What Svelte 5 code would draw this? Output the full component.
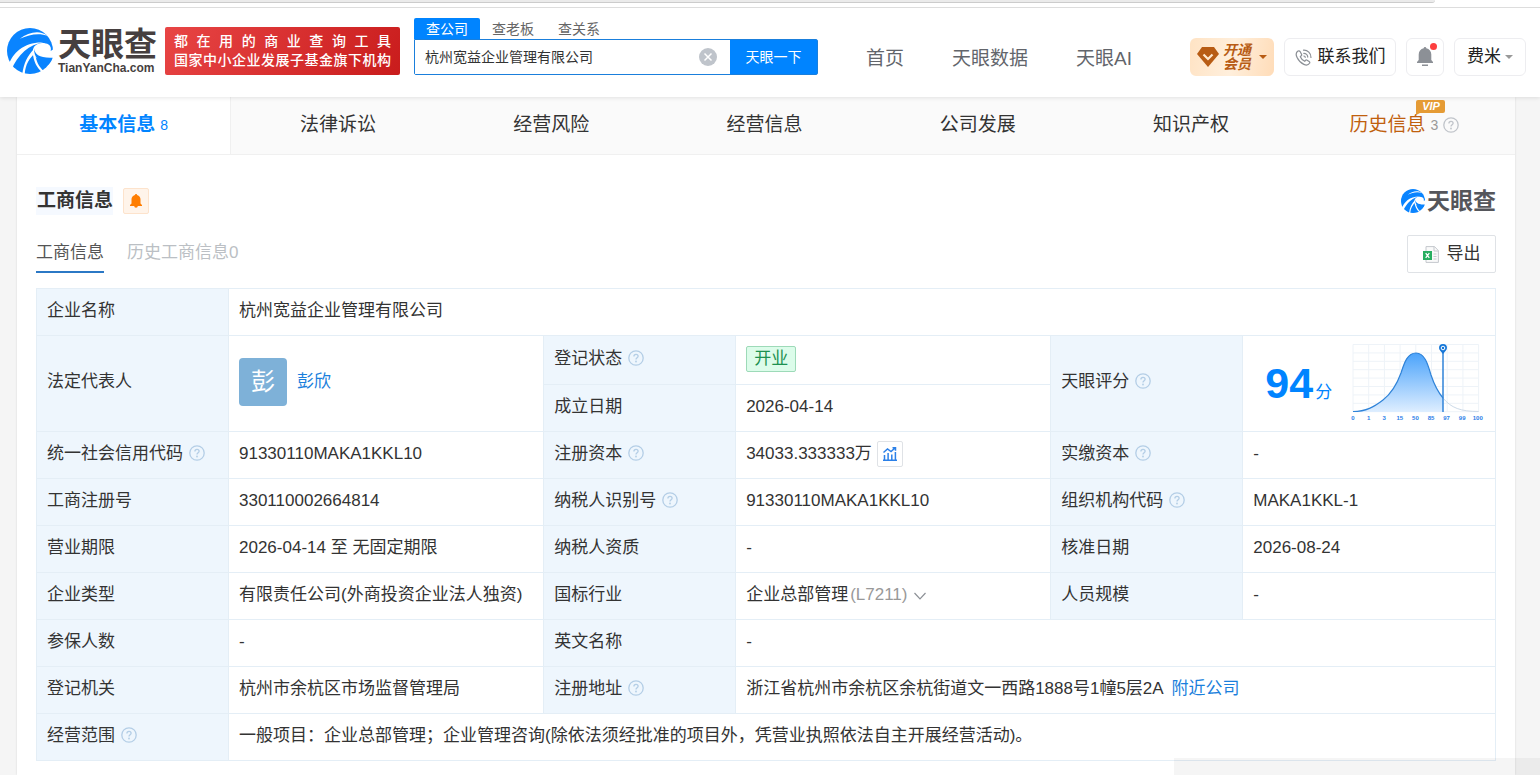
<script lang="ts">
    let keyword = "杭州宽益企业管理有限公司";

    const searchTypes = ["查公司", "查老板", "查关系"];
    const navLinks = ["首页", "天眼数据", "天眼AI"];
    const tabs = ["法律诉讼", "经营风险", "经营信息", "公司发展", "知识产权"];

    const chartLabels = [0, 1, 3, 15, 50, 85, 97, 99, 100];
    const gridLines = [0, 1, 2, 3, 4, 5, 6, 7, 8];
</script>

{#snippet help()}
    <svg class="help" viewBox="0 0 16 16" aria-hidden="true">
        <circle cx="8" cy="8" r="7.2" fill="none" stroke="currentColor" stroke-width="1.3"/>
        <path d="M5.9 6.5C5.9 5.1 6.8 4.3 8 4.3s2.1.8 2.1 1.9c0 1.4-2.1 1.6-2.1 3.2" fill="none" stroke="currentColor" stroke-width="1.3"/>
        <circle cx="8" cy="11.5" r=".9" fill="currentColor"/>
    </svg>
{/snippet}

{#snippet swirl()}
    <svg class="swirl" viewBox="8 10 136 136" aria-hidden="true">
        <circle cx="76" cy="78" r="68" fill="#0a84ff"/>
        <g fill="#fff">
            <path d="M112 54C92 54 80 70 86 86C94 104 112 110 152 104L152 68L137 78C141 62 130 54 112 54Z"/>
            <path d="M46 42C72 21 106 15 128 33C104 24 74 28 46 42Z"/>
            <path d="M12 122C24 82 62 50 116 53C74 58 40 88 20 136Z"/>
            <path d="M88 72C68 92 56 118 53 150L60 150C62 120 72 100 92 84Z"/>
            <path d="M84 82C86 108 96 128 112 141L117 137C102 124 94 108 92 88Z"/>
        </g>
        <path d="M88 70C89 88 106 100 143 98C140 108 134 116 128 120C104 116 87 96 88 70Z" fill="#0a84ff"/>
    </svg>
{/snippet}

<div class="page">
    <header>
        <div class="strip"></div>
        <div class="bar">
            <a class="logo" href="#home">
                {@render swirl()}
                <span class="wordmark">
                    <b>天眼查</b>
                    <small>TianYanCha.com</small>
                </span>
            </a>
            <div class="slogan">
                <p>都在用的商业查询工具</p>
                <p>国家中小企业发展子基金旗下机构</p>
            </div>
            <form class="search" on:submit|preventDefault>
                <div class="types">
                    {#each searchTypes as type, i}
                        <button type="button" class:active={i === 0}>{type}</button>
                    {/each}
                </div>
                <div class="field">
                    <input type="text" aria-label="查公司" bind:value={keyword}/>
                    <button type="button" class="clear" aria-label="清空" on:click={() => (keyword = "")}>
                        <svg viewBox="0 0 18 18">
                            <circle cx="9" cy="9" r="9" fill="#bfc4cb"/>
                            <path d="M5.5 5.5l7 7M12.5 5.5l-7 7" stroke="#fff" stroke-width="1.5"/>
                        </svg>
                    </button>
                    <button class="submit">天眼一下</button>
                </div>
            </form>
            <nav>
                {#each navLinks as link}
                    <a href="#nav">{link}</a>
                {/each}
            </nav>
            <div class="actions">
                <button class="vip">
                    <svg class="gem" viewBox="0 0 22 20">
                        <path d="M5 0h12l5 7-11 13L0 7z" fill="#b85c14"/>
                        <path d="M6.500 7.500l4.500 4.500 4.500-4.500" fill="none" stroke="#ffe9cf" stroke-width="2.200"/>
                    </svg>
                    <span>开通<br>会员</span>
                    <svg class="caret" viewBox="0 0 8 4"><path d="M0 0h8L4 4z" fill="currentColor"/></svg>
                </button>
                <button class="contact">
                    <svg class="phone" viewBox="0 0 18 18" fill="none" stroke="#8c9096" stroke-width="1.300" stroke-linecap="round" stroke-linejoin="round">
                        <path d="M3.200 2.200C1.200 3.500.7 6 2.200 9c1.600 3.400 4 5.800 7.200 7.300 2.700 1.200 4.800.6 6-1.200.4-.7.2-1.400-.4-1.800l-2.200-1.500c-.6-.4-1.300-.3-1.700.2l-.8 1c-2.200-1-3.700-2.600-4.700-4.900l1-.9c.5-.4.6-1 .3-1.600L5.400 2.700c-.5-.8-1.300-1-2.200-.5z"/>
                        <path d="M9.300 4.600c2.300-.1 4.200 1.700 4.200 4M9 1.300c4.400-.3 8 3.200 7.900 7.600M9.400 7.400c.8 0 1.400.6 1.400 1.400"/>
                    </svg>
                    联系我们
                </button>
                <button class="notice" aria-label="消息">
                    <svg class="bell" viewBox="0 0 18 20" fill="#8c9096">
                        <path d="M9 0c.8 0 1.300.6 1.300 1.300C13.400 2 15.300 4.500 15.300 7.500V13l1.700 2v1H1v-1l1.700-2V7.500c0-3 1.900-5.500 5-6.200C7.700.6 8.200 0 9 0zM6 17.500h6V19H6z"/>
                    </svg>
                    <i class="dot"></i>
                </button>
                <button class="user">
                    费米
                    <svg class="caret" viewBox="0 0 8 4"><path d="M0 0h8L4 4z" fill="currentColor"/></svg>
                </button>
            </div>
        </div>
    </header>

    <main>
        <div class="tabs">
            <a class="current" href="#base">基本信息 <small>8</small></a>
            {#each tabs as tab}
                <a href="#tab">{tab}</a>
            {/each}
            <a class="history" href="#history">
                <span class="label">历史信息
                    <svg class="tag" viewBox="0 0 29 15" aria-label="VIP">
                        <path d="M2 0h25a2 2 0 0 1 2 2v9a2 2 0 0 1-2 2H4l-4 2V2a2 2 0 0 1 2-2z" fill="#e59b35"/>
                        <text x="15" y="10" text-anchor="middle">VIP</text>
                    </svg>
                </span>
                <small>3</small>
                {@render help()}
            </a>
        </div>

        <section>
            <div class="heading">
                <h2>工商信息</h2>
                <button class="subscribe" aria-label="订阅">
                    <svg viewBox="0 0 12 14" fill="#ff7d00">
                        <path d="M6 0c.7 0 1 .4 1.100.9C9.400 1.500 10.500 3.300 10.500 5.300V9.500L12 11v1H7.800a1.800 1.800 0 0 1-3.600 0H0v-1l1.500-1.500V5.300c0-2 1.100-3.800 3.400-4.400C5 .4 5.300 0 6 0z"/>
                    </svg>
                </button>
                <div class="brand">{@render swirl()}<b>天眼查</b></div>
            </div>

            <div class="subtabs">
                <a class="current" href="#now">工商信息</a>
                <a href="#past">历史工商信息0</a>
                <button class="export">
                    <svg viewBox="0 0 16 17">
                        <path d="M3 .6h8.500l3.900 4v11.800H3z" fill="#fafafa" stroke="#c4c8cd"/>
                        <path d="M11 .6v4.400h4.400M10.500 8h3M10.500 10.500h3M10.500 13h3" fill="none" stroke="#c4c8cd"/>
                        <path d="M0 5h9v9H0z" fill="#27ae60"/>
                        <path d="M2.700 7.200l3.600 4.600M6.300 7.200l-3.600 4.600" stroke="#fff" stroke-width="1.300"/>
                    </svg>
                    导出
                </button>
            </div>

            <table>
                <colgroup>
                    <col class="name"><col class="wide">
                    <col class="name"><col class="wide">
                    <col class="name"><col>
                </colgroup>
                <tbody>
                    <tr>
                        <th>企业名称</th>
                        <td colspan="5">杭州宽益企业管理有限公司</td>
                    </tr>
                    <tr class="status">
                        <th rowspan="2">法定代表人</th>
                        <td rowspan="2">
                            <div class="person"><span class="avatar">彭</span><a href="#person">彭欣</a></div>
                        </td>
                        <th>登记状态{@render help()}</th>
                        <td><span class="open">开业</span></td>
                        <th rowspan="2">天眼评分{@render help()}</th>
                        <td rowspan="2" class="score-cell">
                            <div class="score">
                                <span><b>94</b>分</span>
                                <svg viewBox="0 0 136 84" role="img" aria-label="天眼评分">
                                    <defs>
                                        <linearGradient id="fill" x1="0" y1="0" x2="0" y2="1">
                                            <stop offset="0" stop-color="#4ba3fb"/>
                                            <stop offset="1" stop-color="#deeeff"/>
                                        </linearGradient>
                                    </defs>
                                    <g stroke="#eef3f8">
                                        {#each gridLines as n}
                                            <path d="M{4 + n * 15.7} 3.500V71M4 {3.5 + n * 8.4}H129.600"/>
                                        {/each}
                                    </g>
                                    <path d="M4 70.500C17 70.500 25 66 34 59C43 52 48 43 52 32C55 23 58 12 67 12C76 12 79 24 82 34C85 43 89 51 94 57V71H4z" fill="url(#fill)"/>
                                    <path d="M94 57C102 67 112 70.500 129.600 70.500" fill="none" stroke="#ccdae8"/>
                                    <path d="M4 70.500C17 70.500 25 66 34 59C43 52 48 43 52 32C55 23 58 12 67 12C76 12 79 24 82 34C85 43 89 51 94 57" fill="none" stroke="#2f83d8" stroke-width="1.200"/>
                                    <path d="M94 8V71" stroke="#2f83d8" stroke-width="1.500"/>
                                    <path d="M90 7a4 4 0 1 1 8 0c0 2-2.500 4-4 6c-1.500-2-4-4-4-6z" fill="#1677d8"/>
                                    <circle cx="94" cy="7" r="1.800" fill="#1677d8" stroke="#fff"/>
                                    {#each chartLabels as label, i}
                                        <text x={4 + i * 15.6} y="79" text-anchor="middle">{label}</text>
                                    {/each}
                                </svg>
                            </div>
                        </td>
                    </tr>
                    <tr>
                        <th>成立日期</th>
                        <td>2026-04-14</td>
                    </tr>
                    <tr>
                        <th>统一社会信用代码{@render help()}</th>
                        <td>91330110MAKA1KKL10</td>
                        <th>注册资本{@render help()}</th>
                        <td>
                            <div class="capital">
                                34033.333333万
                                <button aria-label="注册资本变化">
                                    <svg viewBox="0 0 14 14" fill="none" stroke="#2b80e8" stroke-width="1.500">
                                        <path d="M0 13.300h14M1.500 13V8M5.100 13V6M8.800 13V7.500M12.400 13V5"/>
                                        <path d="M.5 5.500L4.500 2l3.500 2.500L12 1M9.500.7h3v3"/>
                                    </svg>
                                </button>
                            </div>
                        </td>
                        <th>实缴资本{@render help()}</th>
                        <td>-</td>
                    </tr>
                    <tr>
                        <th>工商注册号</th>
                        <td>330110002664814</td>
                        <th>纳税人识别号{@render help()}</th>
                        <td>91330110MAKA1KKL10</td>
                        <th>组织机构代码{@render help()}</th>
                        <td>MAKA1KKL-1</td>
                    </tr>
                    <tr>
                        <th>营业期限</th>
                        <td>2026-04-14 至 无固定期限</td>
                        <th>纳税人资质</th>
                        <td>-</td>
                        <th>核准日期</th>
                        <td>2026-08-24</td>
                    </tr>
                    <tr>
                        <th>企业类型</th>
                        <td>有限责任公司(外商投资企业法人独资)</td>
                        <th>国标行业</th>
                        <td>
                            企业总部管理<span class="code">(L7211)</span>
                            <svg class="chevron" viewBox="0 0 12 8"><path d="M.5 1L6 6.800 11.500 1" fill="none" stroke="#8c9096" stroke-width="1.200"/></svg>
                        </td>
                        <th>人员规模</th>
                        <td>-</td>
                    </tr>
                    <tr>
                        <th>参保人数</th>
                        <td>-</td>
                        <th>英文名称</th>
                        <td colspan="3">-</td>
                    </tr>
                    <tr>
                        <th>登记机关</th>
                        <td>杭州市余杭区市场监督管理局</td>
                        <th>注册地址{@render help()}</th>
                        <td colspan="3">浙江省杭州市余杭区余杭街道文一西路1888号1幢5层2A <a class="nearby" href="#nearby">附近公司</a></td>
                    </tr>
                    <tr>
                        <th>经营范围{@render help()}</th>
                        <td colspan="5">一般项目：企业总部管理；企业管理咨询(除依法须经批准的项目外，凭营业执照依法自主开展经营活动)。</td>
                    </tr>
                </tbody>
            </table>
        </section>
    </main>
    <div class="overlay"></div>
</div>

<style>
    :global(body) {
        background: #f5f5f5;
    }

    .page {
        display: flex;
        flex-direction: column;
        min-height: 100vh;
        font: 17px/24px "Liberation Sans", "Noto Sans CJK SC", sans-serif;
        color: #333;
    }

    .page * {
        box-sizing: border-box;
    }

    a {
        color: inherit;
        text-decoration: none;
    }

    button {
        display: flex;
        align-items: center;
        justify-content: center;
        padding: 0;
        border: 0;
        background: none;
        font: inherit;
        color: inherit;
        white-space: nowrap;
        cursor: pointer;
    }

    svg {
        flex: none;
    }

    header {
        position: relative;
        background: #fff;
        box-shadow: 0 1px 4px rgba(0, 0, 0, 0.1);
    }

    .strip {
        height: 8px;
        border-bottom: 1px solid #ddd;
    }

    .strip::before {
        content: "";
        display: block;
        width: 93.2%;
        height: 2px;
        background: #ebebeb;
        border-bottom: 1px solid #ccc;
        border-bottom-right-radius: 8px;
    }

    .bar {
        display: flex;
        align-items: flex-end;
        padding: 10px 14px 22px 7px;
    }

    .logo {
        display: flex;
        align-items: center;
        gap: 5px;
        width: 158px;
    }

    .logo .swirl {
        width: 46px;
        height: 46px;
    }

    .wordmark {
        display: flex;
        flex-direction: column;
        padding-top: 2px;
        color: #463f3f;
    }

    .wordmark b {
        font-size: 33px;
        font-weight: 700;
        line-height: 32px;
    }

    .wordmark small {
        font-size: 12px;
        font-weight: 700;
        line-height: 14px;
    }

    .slogan {
        width: 235px;
        height: 48px;
        padding: 5px 9px;
        border-radius: 2px;
        background: linear-gradient(120deg, #e84545, #c91c1c);
        color: #fff;
    }

    .slogan p {
        margin: 0;
        font-size: 14px;
        font-weight: 500;
        line-height: 19px;
        text-align: justify;
        text-align-last: justify;
    }

    .search {
        margin-left: 14px;
    }

    .types {
        display: flex;
    }

    .types button {
        width: 66px;
        height: 21px;
        font-size: 14px;
        color: #666;
    }

    .types .active {
        border-radius: 2px 2px 0 0;
        background: #0084ff;
        color: #fff;
    }

    .field {
        display: flex;
        width: 404px;
        height: 36px;
        border: 1px solid #1a7fdc;
        border-radius: 0 2px 2px 2px;
    }

    .field input {
        flex: 1;
        min-width: 0;
        padding: 0 10px;
        border: 0;
        outline: 0;
        font: inherit;
        font-size: 14px;
        color: #333;
    }

    .clear svg {
        width: 18px;
        height: 18px;
        margin-right: 13px;
    }

    .submit {
        width: 87px;
        background: #0084ff;
        color: #fff;
        font-size: 14px;
    }

    nav {
        display: flex;
        gap: 48px;
        margin-left: 48px;
        color: #62656b;
        font-size: 19px;
        line-height: 32px;
        white-space: nowrap;
    }

    .actions {
        display: flex;
        gap: 10px;
        margin-left: auto;
        margin-bottom: -1px;
        color: #222;
    }

    .actions button {
        height: 38px;
        border: 1px solid #ededf0;
        border-radius: 6px;
    }

    .actions .vip {
        gap: 4px;
        width: 84px;
        border: 0;
        background: linear-gradient(100deg, #ffe3c4, #ffefdc 50%, #ffdcb8);
        color: #b85c14;
        font-size: 14px;
        font-style: italic;
        font-weight: 700;
        line-height: 14px;
    }

    .gem {
        width: 22px;
        height: 20px;
    }

    .caret {
        width: 8px;
        height: 4px;
    }

    .vip .caret {
        margin-left: 4px;
    }

    .contact {
        gap: 6px;
        width: 112px;
    }

    .phone {
        width: 17px;
        height: 17px;
    }

    .notice {
        position: relative;
        width: 38px;
    }

    .bell {
        width: 18px;
        height: 20px;
    }

    .dot {
        position: absolute;
        top: 4px;
        right: 6px;
        width: 7px;
        height: 7px;
        border-radius: 50%;
        background: #fd3f3f;
    }

    .user {
        gap: 4px;
        width: 72px;
    }

    .user .caret {
        color: #999;
    }

    main {
        flex: 1;
        margin: 0 25px 0 17px;
        background: #fff;
        box-shadow: 0 0 2px rgba(0, 0, 0, 0.12);
    }

    .tabs {
        display: flex;
        padding-right: 4px;
        background: #fafafa;
        border-bottom: 1px solid #f0f0f0;
        font-size: 19px;
    }

    .tabs a {
        display: flex;
        flex: 1;
        align-items: center;
        justify-content: center;
        gap: 5px;
        height: 57px;
        padding-bottom: 2px;
    }

    .tabs small {
        font-size: 14px;
    }

    .tabs .current {
        background: #fff;
        border-right: 1px solid #f0f0f0;
        color: #0084ff;
        font-weight: 700;
    }

    .tabs .current small {
        font-weight: 400;
    }

    .history .label {
        position: relative;
        color: #c0600e;
    }

    .history small {
        color: #999;
    }

    .history .help {
        margin: 0;
        color: #c0c4ca;
    }

    .tag {
        position: absolute;
        top: -13px;
        right: -20px;
        width: 29px;
        height: 15px;
    }

    .tag text {
        fill: #fff;
        font-size: 11px;
        font-style: italic;
        font-weight: 700;
    }

    section {
        padding: 32px 19px 14px;
    }

    .heading {
        display: flex;
        align-items: center;
        gap: 10px;
        margin-bottom: 20px;
    }

    h2 {
        margin: 0;
        padding-left: 1px;
        background: #f5f9ff;
        font-size: 19px;
        line-height: 28px;
    }

    .subscribe {
        width: 26px;
        height: 26px;
        border: 1px solid #fde3cc;
        border-radius: 2px;
        background: #fff4ea;
    }

    .subscribe svg {
        width: 12px;
        height: 14px;
    }

    .brand {
        display: flex;
        align-items: center;
        gap: 2px;
        margin-left: auto;
        color: #55565b;
        font-size: 23px;
    }

    .brand .swirl {
        width: 24px;
        height: 24px;
    }

    .subtabs {
        display: flex;
        align-items: flex-end;
        gap: 23px;
        margin-bottom: 15px;
    }

    .subtabs a {
        height: 32px;
        color: #bbbfc4;
    }

    .subtabs .current {
        border-bottom: 2px solid #2b78c5;
        color: #555;
    }

    .export {
        gap: 8px;
        width: 89px;
        height: 38px;
        margin-left: auto;
        border: 1px solid #dfe2e6;
        border-radius: 2px;
    }

    .export svg {
        width: 16px;
        height: 17px;
    }

    table {
        width: 100%;
        border-collapse: collapse;
        table-layout: fixed;
    }

    .name {
        width: 192px;
    }

    .wide {
        width: 21.6%;
    }

    tr {
        height: 47px;
    }

    .status {
        height: 49px;
    }

    th,
    td {
        padding: 0 10px 3px;
        border: 1px solid #e4eef6;
        text-align: left;
        vertical-align: middle;
    }

    th {
        background: #eef6fd;
        font-weight: 400;
    }

    .help {
        width: 16px;
        height: 16px;
        margin-left: 6px;
        vertical-align: -2px;
        color: #b4cee6;
    }

    .person,
    .capital,
    .score {
        display: flex;
        align-items: center;
    }

    .person {
        gap: 10px;
        color: #1a7fdc;
    }

    .avatar {
        width: 48px;
        border-radius: 4px;
        background: #7eb1d8;
        color: #fff;
        font-size: 24px;
        line-height: 48px;
        text-align: center;
    }

    .open {
        display: inline-block;
        padding: 0 7px;
        border: 1px solid #9ddab8;
        border-radius: 2px;
        background: #dcfcea;
        color: #1d9150;
    }

    .score-cell {
        padding: 0 16px 2px 22px;
    }

    .score {
        justify-content: space-between;
        color: #0084ff;
        white-space: nowrap;
    }

    .score b {
        margin-right: 2px;
        font-size: 43px;
        line-height: 48px;
    }

    .score svg {
        width: 136px;
        height: 84px;
        margin-right: -6px;
    }

    .score text {
        fill: #2b80e8;
        font-size: 6px;
        font-weight: 700;
    }

    .capital {
        gap: 5px;
    }

    .capital button {
        width: 26px;
        height: 26px;
        border: 1px solid #dfe2e6;
        border-radius: 2px;
    }

    .capital svg {
        width: 14px;
        height: 14px;
    }

    .code {
        margin-left: 2px;
        color: #999;
    }

    .chevron {
        width: 12px;
        height: 8px;
        margin-left: 2px;
    }

    .nearby {
        margin-left: 4px;
        color: #1a7fdc;
    }

    .overlay {
        position: fixed;
        right: 0;
        bottom: 0;
        width: 366px;
        height: 17px;
        background: rgba(0, 0, 0, 0.04);
        pointer-events: none;
    }
</style>
